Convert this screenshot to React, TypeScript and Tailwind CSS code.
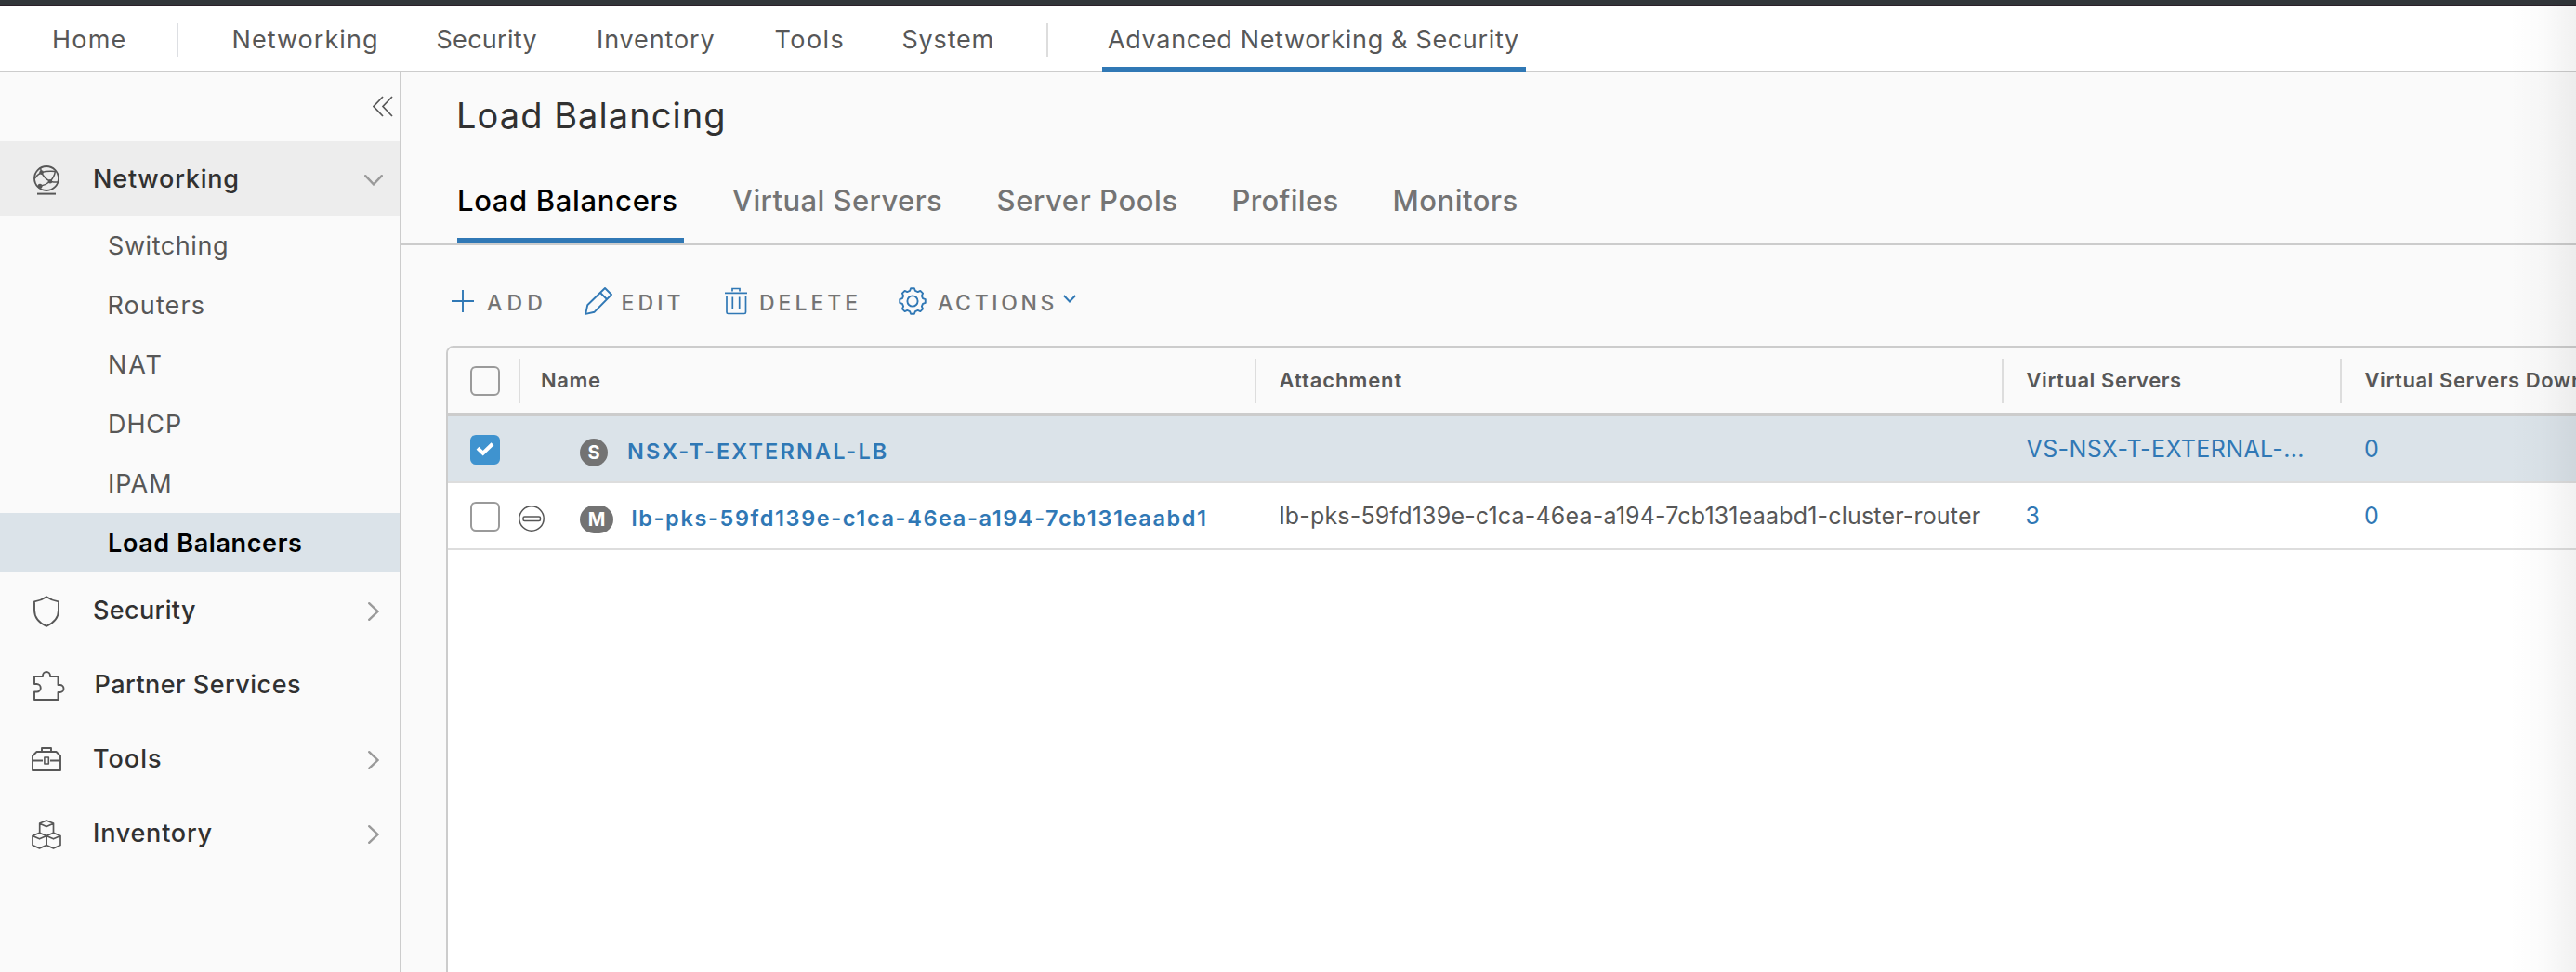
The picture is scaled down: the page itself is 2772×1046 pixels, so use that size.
import React from "react";

const gearPath = (() => {
  const teeth = 8;
  const points: string[] = [];
  for (let i = 0; i < teeth; i++) {
    const base = (i / teeth) * 360 - 90;
    const shape: [number, number][] = [
      [-15, 11.4],
      [-8, 13.9],
      [8, 13.9],
      [15, 11.4],
    ];
    for (const [offset, radius] of shape) {
      const a = ((base + offset) * Math.PI) / 180;
      points.push(`${(15 + radius * Math.cos(a)).toFixed(2)} ${(15 + radius * Math.sin(a)).toFixed(2)}`);
    }
  }
  return `M${points.join("L")}Z`;
})();

function NetworkIcon() {
  return (
    <svg width="28" height="32" viewBox="0 0 28 32" fill="none" stroke="#575757" strokeWidth="1.8">
      <circle cx="14" cy="14" r="13" />
      <path d="M4 30.6H24" strokeWidth="2" />
      <path
        d="M7.5 2.7L8.6 7.6C10.5 11.5 14.5 15.5 18 17.2C21 17.9 24 18.2 26.6 18M8.6 7.6C13 6 18.5 6 23.8 6.4M23.4 6.4C22.8 10.5 20.8 14.3 18 17.2C14.5 20.2 11 21.5 7.2 22.2M8.6 7.6C5 9.5 2.6 11.8 1.2 14.5"
        strokeWidth="1.5"
      />
      <g fill="#575757" stroke="none">
        <circle cx="8.6" cy="7.6" r="2.3" />
        <circle cx="18" cy="17.2" r="2.3" />
        <circle cx="7" cy="22.2" r="2.5" />
      </g>
    </svg>
  );
}

function ShieldIcon() {
  return (
    <svg width="28" height="34" viewBox="0 0 28 34" fill="none" stroke="#575757" strokeWidth="1.9" strokeLinejoin="round">
      <path d="M14 1.2C10 4 6 5.6 1 6.4V15.5C1 23.5 5.5 29 14 32.8C22.5 29 27 23.5 27 15.5V6.4C22 5.6 18 4 14 1.2Z" />
    </svg>
  );
}

function PuzzleIcon() {
  return (
    <svg width="34" height="33" viewBox="0 0 34 33" fill="none" stroke="#575757" strokeWidth="1.9" strokeLinejoin="round">
      <path d="M1 14V6H10V5.2A4 4.2 0 0 1 18 5.2V6H26.5V15H28.5A3.9 3.9 0 0 1 28.5 23H26.5V31H1V22.5H3.5A4.1 4.1 0 0 0 3.5 14Z" />
    </svg>
  );
}

function ToolboxIcon() {
  return (
    <svg width="32" height="27" viewBox="0 0 32 27" fill="none" stroke="#575757" strokeWidth="1.9" strokeLinejoin="round">
      <path d="M1 25V9.5L5.5 5H26.5L31 9.5V25ZM11 5V1H21V5M1 14.5H12M20 14.5H31" />
      <rect x="13.9" y="11" width="4.4" height="7" strokeWidth="1.6" />
    </svg>
  );
}

function CubesIcon() {
  return (
    <svg width="32" height="32" viewBox="0 0 32 32" fill="none" stroke="#575757" strokeWidth="1.7" strokeLinejoin="round">
      <path d="M8.7 14V4L16 1L23.5 4V14M8.7 4.2L16 7.5L23.5 4.2" />
      <path d="M8.5 14.2L16 17.5V27.5L8.5 31L1 27.5V17.5ZM1 17.5L8.5 20.8L16 17.5" />
      <path d="M23.5 14.2L31 17.5V27.5L23.5 31L16 27.5V17.5ZM16 17.5L23.5 20.8L31 17.5" />
    </svg>
  );
}

function ChevronRight() {
  return (
    <svg width="12" height="20" viewBox="0 0 12 20" fill="none" stroke="#9a9a9a" strokeWidth="2.4" strokeLinecap="round">
      <path d="M1.2 1.2L10.6 10L1.2 18.8" />
    </svg>
  );
}

function ChevronDown() {
  return (
    <svg width="20" height="12" viewBox="0 0 20 12" fill="none" stroke="#9a9a9a" strokeWidth="2.4" strokeLinecap="round">
      <path d="M1.2 1.2L10 10.4L18.8 1.2" />
    </svg>
  );
}

const topItems = [
  { label: "Networking", cls: "w-[220px] tracking-[1.05px]" },
  { label: "Security", cls: "w-[172.5px] tracking-[0.29px]" },
  { label: "Inventory", cls: "w-[191.5px] tracking-[0.88px]" },
  { label: "Tools", cls: "w-[137px] tracking-[1.44px]" },
  { label: "System", cls: "w-[155px] tracking-[0.8px]" },
];

function TopNav() {
  return (
    <nav className="flex h-[72px] items-center border-b-2 border-[#cccccc] bg-white pl-[56px] text-[27px] text-[#575757]">
      <a className="w-[134px] pt-1 tracking-[1.2px]">Home</a>
      <span className="mr-[57.5px] mt-1 h-9 w-0.5 bg-[#dddfe3]" />
      {topItems.map((item) => (
        <a key={item.label} className={`shrink-0 pt-1 ${item.cls}`}>
          {item.label}
        </a>
      ))}
      <span className="mr-[58px] mt-1 h-9 w-0.5 bg-[#dddddd]" />
      <a className="-mb-0.5 flex h-[72px] w-[456px] items-center whitespace-nowrap border-b-[6px] border-[#3078b5] pl-[6.5px] pt-2 tracking-[0.66px]">
        Advanced Networking &amp; Security
      </a>
    </nav>
  );
}

const networkingItems = [
  { label: "Switching", cls: "pl-[116px] tracking-[0.57px]" },
  { label: "Routers", cls: "pl-[115.5px] tracking-[1.1px]" },
  { label: "NAT", cls: "pl-[116px] tracking-[1.91px]" },
  { label: "DHCP", cls: "pl-[116px] tracking-[0.91px]" },
  { label: "IPAM", cls: "pl-[116px] tracking-[1px]" },
  { label: "Load Balancers", cls: "pl-[116px] tracking-[0.62px] bg-[#dbe3e9] font-semibold text-black" },
];

const groups = [
  { label: "Security", icon: <ShieldIcon />, iconCls: "pl-[36px] pt-[3px]", cls: "tracking-[0.36px]", chevron: true },
  { label: "Partner Services", icon: <PuzzleIcon />, iconCls: "pl-[36px] pt-[4px]", cls: "tracking-[0.48px] pl-[1.5px]", chevron: false },
  { label: "Tools", icon: <ToolboxIcon />, iconCls: "pl-[34px] pt-[3px]", cls: "tracking-[1.02px]", chevron: true },
  { label: "Inventory", icon: <CubesIcon />, iconCls: "pl-[34px] pt-[4px]", cls: "tracking-[0.77px]", chevron: true },
];

function Sidebar() {
  return (
    <aside className="flex w-[432px] shrink-0 flex-col border-r-2 border-[#cccccc] text-[27px]">
      <div className="flex h-[74px] items-start justify-end pr-[7px] pt-[24.5px]">
        <svg width="22" height="23" viewBox="0 0 22 23" fill="none" stroke="#575757" strokeWidth="1.7">
          <path d="M11 1L1 11.5L11 22M21 1L11 11.5L21 22" />
        </svg>
      </div>
      <div className="flex h-20 items-center bg-[#ededed] font-medium text-[#313131]">
        <span className="w-[100px] pl-[36px] pt-1">
          <NetworkIcon />
        </span>
        <span className="flex-1 pt-0.5 tracking-[0.8px]">Networking</span>
        <span className="pr-[18px] pt-[3px]">
          <ChevronDown />
        </span>
      </div>
      {networkingItems.map((item) => (
        <a key={item.label} className={`flex h-16 items-center pt-0.5 text-[#575757] ${item.cls}`}>
          {item.label}
        </a>
      ))}
      {groups.map((group) => (
        <div key={group.label} className="flex h-20 items-center font-medium text-[#313131]">
          <span className={`w-[100px] shrink-0 ${group.iconCls}`}>{group.icon}</span>
          <span className={`flex-1 pt-0.5 ${group.cls}`}>{group.label}</span>
          {group.chevron && (
            <span className="pr-[22px] pt-[4px]">
              <ChevronRight />
            </span>
          )}
        </div>
      ))}
    </aside>
  );
}

const tabs = [
  { label: "Virtual Servers", cls: "w-[284.5px] tracking-[0.41px]" },
  { label: "Server Pools", cls: "w-[253px] tracking-[0.6px]" },
  { label: "Profiles", cls: "w-[173px] tracking-[0.33px]" },
  { label: "Monitors", cls: "w-[150px] tracking-[0.51px]" },
];

function Tabs() {
  return (
    <div className="flex h-[94px] border-b-2 border-[#cccccc] pl-[60px] text-[31px] font-medium leading-[91px] text-[#747474]">
      <span className="mr-[52px] h-[92px] w-[244px] whitespace-nowrap border-b-[6px] border-[#3078b5] tracking-[0.65px] text-black">
        Load Balancers
      </span>
      {tabs.map((tab) => (
        <span key={tab.label} className={`whitespace-nowrap ${tab.cls}`}>
          {tab.label}
        </span>
      ))}
    </div>
  );
}

function Toolbar() {
  return (
    <div className="flex h-[108px] items-start pl-[54px] pt-[44px] text-[23px] font-medium leading-[37px] text-[#747474]">
      <div className="flex w-[143px]">
        <svg className="mt-[4px]" width="24" height="24" viewBox="0 0 24 24" stroke="#3078b5" strokeWidth="1.9">
          <path d="M12 0V24M0 12H24" />
        </svg>
        <span className="pl-[14px] tracking-[5.2px]">ADD</span>
      </div>
      <div className="flex w-[150px]">
        <svg className="mt-px" width="30" height="30" viewBox="0 0 30 30" fill="none" stroke="#3078b5" strokeWidth="1.9" strokeLinejoin="round">
          <path d="M22 1L29 8L10.7 26.7L1.2 28.9L3.2 19.3ZM17 6L24 13" />
        </svg>
        <span className="pl-[9.5px] tracking-[4.1px]">EDIT</span>
      </div>
      <div className="flex w-[188px]">
        <svg className="mt-px" width="26" height="30" viewBox="0 0 26 30" fill="none" stroke="#3078b5" strokeWidth="1.7">
          <path d="M9 4.5V1.5H17V4.5M1 6.3H25M3 9V27A1.5 1.5 0 0 0 4.5 28.5H22A1.5 1.5 0 0 0 23.5 27V9M9.3 10.5V24M16.7 10.5V24" />
        </svg>
        <span className="pl-[12px] tracking-[4px]">DELETE</span>
      </div>
      <div className="flex">
        <svg className="mt-px" width="30" height="30" viewBox="0 0 30 30" fill="none" stroke="#3078b5" strokeWidth="1.9" strokeLinejoin="round">
          <path d={gearPath} />
          <circle cx="15" cy="15" r="5.6" />
        </svg>
        <span className="w-[147px] pl-[12px] tracking-[3.65px]">ACTIONS</span>
        <svg className="mt-[9px]" width="14" height="9" viewBox="0 0 14 9" fill="none" stroke="#3078b5" strokeWidth="2">
          <path d="M0.8 1L7 7.5L13.2 1" />
        </svg>
      </div>
    </div>
  );
}

function Checkbox({ checked = false }: { checked?: boolean }) {
  if (!checked) return <span className="block size-8 shrink-0 rounded-md border-2 border-[#9a9a9a]" />;
  return (
    <span className="block size-8 shrink-0 rounded-md bg-[#3f93cf]">
      <svg width="32" height="32" viewBox="0 0 32 32" fill="none" stroke="#ffffff" strokeWidth="4">
        <path d="M8 14.3L13.7 19.7L24 9.7" />
      </svg>
    </span>
  );
}

function Separator() {
  return <span className="mt-0.5 h-12 w-0.5 shrink-0 bg-[#dddddd]" />;
}

function Grid() {
  return (
    <section className="ml-[48px] flex flex-1 flex-col overflow-hidden rounded-tl-lg border-l-2 border-t-2 border-[#cccccc] bg-white text-[25px]">
      <div className="flex h-[74px] shrink-0 items-center border-b-4 border-[#cccccc] bg-[#fafafa] text-[22px] font-semibold leading-[30px] text-[#575757]">
        <div className="w-[76px] shrink-0 pl-[24px] pt-[2px]">
          <Checkbox />
        </div>
        <Separator />
        <span className="w-[790px] shrink-0 pl-[22px] tracking-[0.62px]">Name</span>
        <Separator />
        <span className="w-[802px] shrink-0 pl-[24.5px] tracking-[0.93px]">Attachment</span>
        <Separator />
        <span className="w-[362px] shrink-0 pl-[24.5px] tracking-[0.56px]">Virtual Servers</span>
        <Separator />
        <span className="shrink-0 whitespace-nowrap pl-[24.5px] tracking-[0.56px]">Virtual Servers Down</span>
      </div>

      <div className="flex h-[72px] shrink-0 items-center border-b-2 border-[#dddddd] bg-[#dbe3e9] text-[#3078b5]">
        <div className="w-[142px] shrink-0 pl-[24px] pt-[2px]">
          <Checkbox checked />
        </div>
        <div className="flex w-[751.5px] shrink-0 items-center pt-[7px]">
          <span className="flex size-[30px] items-center justify-center rounded-full bg-[#737373] text-[20px] font-bold text-white">S</span>
          <span className="-mt-px pl-[21px] text-[23.5px] font-semibold leading-[30px] tracking-[2.14px]">NSX-T-EXTERNAL-LB</span>
        </div>
        <span className="w-[805px] shrink-0" />
        <span className="w-[363.5px] shrink-0 pt-0.5 tracking-[0.38px]">VS-NSX-T-EXTERNAL-...</span>
        <span className="pt-0.5">0</span>
      </div>

      <div className="flex h-[72px] shrink-0 items-center border-b-2 border-[#dddddd] text-[#3078b5]">
        <div className="flex w-[142px] shrink-0 items-center pl-[24px] pt-[2px]">
          <Checkbox />
          <svg className="ml-[20px] mt-[4px]" width="28" height="28" viewBox="0 0 28 28" fill="none" stroke="#575757">
            <circle cx="14" cy="14" r="13.2" strokeWidth="1.5" />
            <rect x="5" y="12" width="18.5" height="4.5" rx="1.5" strokeWidth="1.5" />
          </svg>
        </div>
        <div className="flex w-[751.5px] shrink-0 items-center pt-[7px]">
          <span className="flex h-[30px] w-[36px] items-center justify-center rounded-full bg-[#737373] text-[20px] font-bold text-white">M</span>
          <span className="-mt-px whitespace-nowrap pl-[19.5px] text-[23.5px] font-semibold leading-[30px] tracking-[1.62px]">
            lb-pks-59fd139e-c1ca-46ea-a194-7cb131eaabd1
          </span>
        </div>
        <span className="w-[804px] shrink-0 pl-px pt-0.5 tracking-[0.19px] text-[#575757]">
          lb-pks-59fd139e-c1ca-46ea-a194-7cb131eaabd1-cluster-router
        </span>
        <span className="w-[364.5px] shrink-0 pt-0.5">3</span>
        <span className="pt-0.5">0</span>
      </div>
    </section>
  );
}

export default function App() {
  return (
    <div className="relative flex h-[1046px] w-[2772px] flex-col overflow-hidden bg-[#fafafa] font-['Inter',sans-serif]">
      <div className="h-[6px] shrink-0 border-b border-[#2b2029] bg-[#32363a]" />
      <TopNav />
      <div className="flex min-h-0 flex-1">
        <Sidebar />
        <main className="flex min-w-0 flex-1 flex-col">
          <h1 className="h-[92px] pl-[59px] text-[38px] leading-[93px] tracking-[1.05px] text-[#313131]">Load Balancing</h1>
          <Tabs />
          <Toolbar />
          <Grid />
        </main>
      </div>
      <div className="pointer-events-none absolute inset-y-0 right-0 w-[72px] bg-linear-to-r from-transparent via-black/[0.016] to-black/[0.055]" />
    </div>
  );
}
